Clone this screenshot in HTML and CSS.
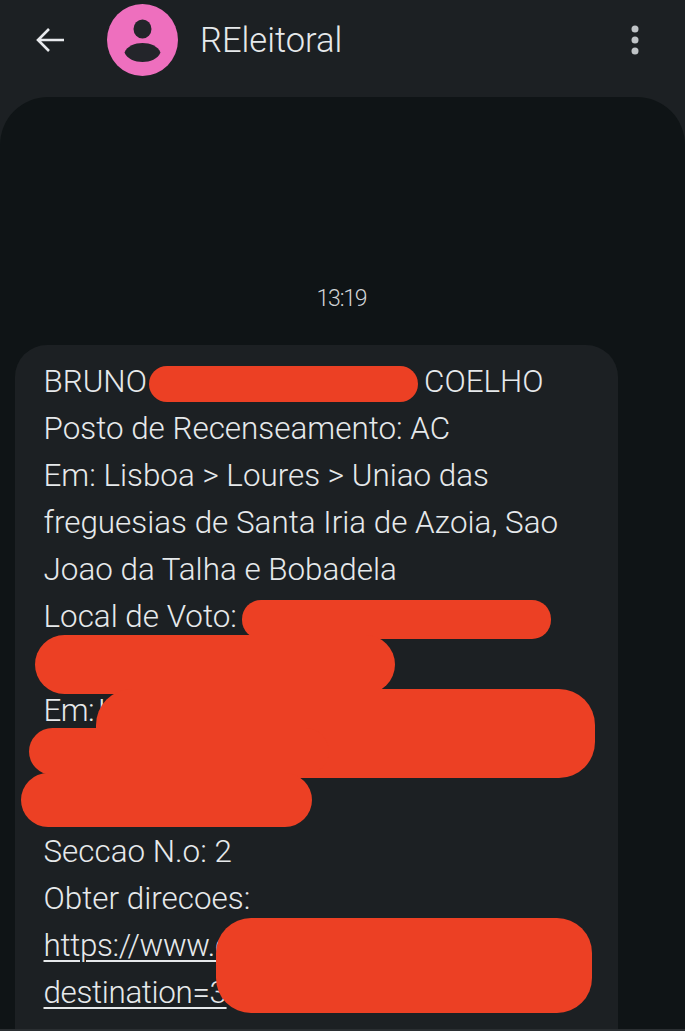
FILE: index.html
```html
<!DOCTYPE html>
<html lang="pt">
<head>
<meta charset="utf-8">
<title>REleitoral</title>
<link rel="stylesheet" href="styles.css">
</head>
<body>
<div class="screen">
  <header class="topbar">
    <svg class="back" viewBox="0 0 32 32" width="32" height="32" aria-hidden="true">
      <path d="M30 16H4M15 5 4 16l11 11" fill="none" stroke="#e8eaed" stroke-width="2.6"/>
    </svg>
    <svg class="avatar" viewBox="0 0 71 72" width="71" height="72" aria-hidden="true">
      <ellipse cx="35.5" cy="36" rx="35.5" ry="36" fill="#ee6fbe"/>
      <ellipse cx="35.5" cy="25" rx="9" ry="9.5" fill="#23252a"/>
      <path d="M17.5 48.5C20 42 28 39 35.5 39s15.5 3 18 9.5C51 55 43 58 35.5 58s-15.5-3-18-9.5Z" fill="#23252a"/>
    </svg>
    <h1 class="title">REleitoral</h1>
    <svg class="more" viewBox="0 0 8 30" width="8" height="30" aria-hidden="true">
      <circle cx="4" cy="4" r="3.5" fill="#bfc3c6"/>
      <circle cx="4" cy="15" r="3.5" fill="#bfc3c6"/>
      <circle cx="4" cy="26" r="3.5" fill="#bfc3c6"/>
    </svg>
  </header>
  <main class="thread">
    <p class="time">13:19</p>
    <article class="bubble">
      <div class="line">BRUNO</div>
      <div class="line line-end">COELHO</div>
      <div class="line">Posto de Recenseamento: AC</div>
      <div class="line">Em: Lisboa &gt; Loures &gt; Uniao das</div>
      <div class="line">freguesias de Santa Iria de Azoia, Sao</div>
      <div class="line">Joao da Talha e Bobadela</div>
      <div class="line">Local de Voto:</div>
      <div class="line"></div>
      <div class="line tight">Em: L</div>
      <div class="line"></div>
      <div class="line"></div>
      <div class="line">Seccao N.o: 2</div>
      <div class="line">Obter direcoes:</div>
      <div class="line"><a class="link" href="#">https://www.g</a></div>
      <div class="line"><a class="link" href="#">destination=3</a></div>
    </article>
    <div class="mark m1"></div>
    <div class="mark m2"></div>
    <div class="mark m3"></div>
    <div class="mark m4"></div>
    <div class="mark m5"></div>
    <div class="mark m6"></div>
    <div class="mark m7"></div>
  </main>
  <div class="edge"></div>
</div>
</body>
</html>
```

FILE: styles.css
```css
* { box-sizing: border-box; }
html, body { margin: 0; padding: 0; }
body { background: #1c2023; font-family: Roboto, "Noto Sans", sans-serif; }
.screen { width: 685px; height: 1031px; overflow: hidden; display: flex; flex-direction: column; background: #1c2023; }
.topbar { height: 97px; flex: none; display: flex; align-items: flex-start; padding-left: 34px; padding-right: 46px; }
.back { margin-top: 24px; flex: none; }
.avatar { margin-top: 4px; margin-left: 41px; flex: none; }
.title { margin: 0 0 0 22px; flex: 1; font-size: 34.5px; line-height: 80px; font-weight: 300; color: #e6e9eb; }
.more { margin-top: 25px; flex: none; }
.thread { position: relative; flex: 1; min-height: 0; background: #0f1416; border-radius: 48px 48px 0 0; padding-top: 186px; }
.time { margin: 0; padding-right: 2px; text-align: center; font-size: 23px; line-height: 32px; font-weight: 300; letter-spacing: -1.2px; color: #d0d3d5; }
.bubble { margin: 30px 0 0 15px; width: 603px; height: 684px; padding: 13px 20px 0 28.5px; background: #1c2023; border-radius: 32px 32px 0 0; color: #e6e9eb; font-size: 31.4px; line-height: 47px; font-weight: 300; position: relative; }
.line { height: 47px; white-space: nowrap; }
.tight { letter-spacing: -0.6px; word-spacing: -3px; }
.line-end { position: absolute; top: 13px; left: 409px; }
.link { color: inherit; letter-spacing: -0.35px; text-decoration: underline; text-decoration-thickness: 2px; text-underline-offset: 4px; }
.mark { position: absolute; background: #ec4024; }
.m1 { left: 149px; top: 269px; width: 269px; height: 36px; border-radius: 18px; }
.m2 { left: 242px; top: 503px; width: 309px; height: 39px; border-radius: 19px; }
.m3 { left: 35px; top: 538px; width: 360px; height: 59px; border-radius: 30px; }
.m4 { left: 96px; top: 592px; width: 499px; height: 89px; border-radius: 36px; }
.m5 { left: 29px; top: 631px; width: 300px; height: 47px; border-radius: 24px; }
.m6 { left: 21px; top: 676px; width: 291px; height: 54px; border-radius: 27px; }
.m7 { left: 216px; top: 821px; width: 376px; height: 95px; border-radius: 35px; }
.edge { height: 2px; flex: none; background: #2a2e31; }
```
